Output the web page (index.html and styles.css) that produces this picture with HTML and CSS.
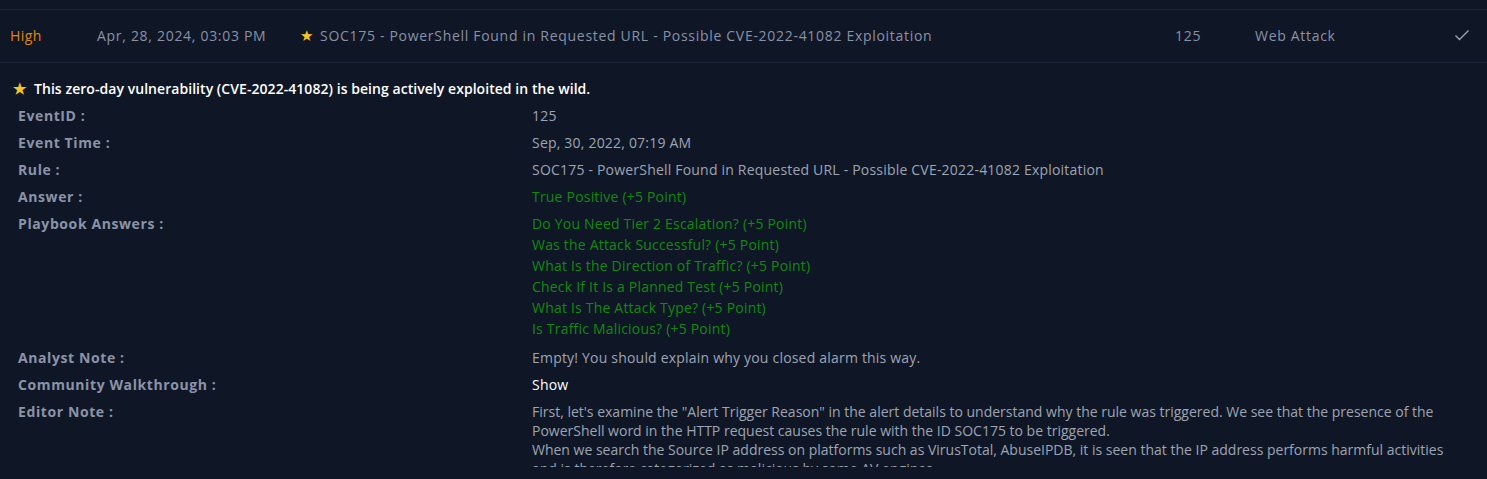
FILE: index.html
```html
<!DOCTYPE html>
<html>
<head>
<meta charset="utf-8">
<link rel="stylesheet" href="styles.css">
</head>
<body>
<div class="page">
  <div class="row">
    <div class="c-sev">High</div>
    <div class="c-date">Apr, 28, 2024, 03:03 PM</div>
    <div class="c-title"><span class="star">★</span>SOC175 - PowerShell Found in Requested URL - Possible CVE-2022-41082 Exploitation</div>
    <div class="c-id">125</div>
    <div class="c-type">Web Attack</div>
    <div class="c-check">
      <svg width="16" height="12" viewBox="0 0 16 12"><path d="M1.5 6.5 L5.5 10.5 L14.5 1.5" fill="none" stroke="#9aa2b6" stroke-width="1.4"/></svg>
    </div>
  </div>
  <div class="details">
    <div class="notice"><span class="star">★</span>This zero-day vulnerability (CVE-2022-41082) is being actively exploited in the wild.</div>
    <div class="grid">
      <div class="lbl">EventID :</div>
      <div class="val">125</div>
      <div class="lbl">Event Time :</div>
      <div class="val">Sep, 30, 2022, 07:19 AM</div>
      <div class="lbl">Rule :</div>
      <div class="val">SOC175 - PowerShell Found in Requested URL - Possible CVE-2022-41082 Exploitation</div>
      <div class="lbl">Answer :</div>
      <div class="val green">True Positive (+5 Point)</div>
      <div class="lbl">Playbook Answers :</div>
      <div class="val green list">
        <div>Do You Need Tier 2 Escalation? (+5 Point)</div>
        <div>Was the Attack Successful? (+5 Point)</div>
        <div>What Is the Direction of Traffic? (+5 Point)</div>
        <div>Check If It Is a Planned Test (+5 Point)</div>
        <div>What Is The Attack Type? (+5 Point)</div>
        <div>Is Traffic Malicious? (+5 Point)</div>
      </div>
      <div class="lbl">Analyst Note :</div>
      <div class="val">Empty! You should explain why you closed alarm this way.</div>
      <div class="lbl">Community Walkthrough :</div>
      <div class="val show">Show</div>
      <div class="lbl">Editor Note :</div>
      <div class="val note">First, let's examine the "Alert Trigger Reason" in the alert details to understand why the rule was triggered. We see that the presence of the PowerShell word in the HTTP request causes the rule with the ID SOC175 to be triggered.<br>When we search the Source IP address on platforms such as VirusTotal, AbuseIPDB, it is seen that the IP address performs harmful activities and is therefore categorized as malicious by some AV engines.</div>
    </div>
  </div>
</div>
</body>
</html>
```

FILE: styles.css
```css
html, body {
  margin: 0;
  padding: 0;
  background: #0f1726;
  overflow: hidden;
}
body {
  font-family: "Open Sans", "Noto Sans", sans-serif;
  font-size: 14px;
  color: #9ea4b3;
}
.page {
  padding-top: 9px;
  height: 458px;
  overflow: hidden;
}
.row {
  display: flex;
  align-items: center;
  padding-bottom: 2px;
  box-sizing: border-box;
  height: 54px;
  border-top: 1px solid #1a2336;
  border-bottom: 1px solid #1a2336;
  letter-spacing: 0.7px;
  color: #8a91a6;
  font-size: 14px;
}
.c-sev { width: 87px; padding-left: 10px; color: #e0860a; letter-spacing: 0.4px; }
.c-date { width: 203px; }
.c-title { width: 875px; display: flex; align-items: center; }
.c-id { width: 80px; }
.c-type { flex: 1; }
.c-check { width: 33px; }
.star { color: #f7c325; margin-right: 7px; font-size: 15px; letter-spacing: 0; }
.details {
  padding: 16px 0 0 13px;
}
.notice {
  color: #ffffff;
  font-weight: 600;
  font-size: 14px;
  letter-spacing: 0.05px;
  display: flex;
  align-items: center;
  height: 18px;
}
.notice .star { margin-right: 8px; }
.grid {
  display: grid;
  grid-template-columns: 514px 1fr;
  padding-left: 5px;
  padding-top: 9px;
  row-gap: 8px;
  line-height: 19px;
  padding-right: 22px;
}
.lbl {
  color: #8b93a8;
  font-weight: 700;
  letter-spacing: 0.6px;
}
.val { color: #9ea4b3; letter-spacing: 0.2px; }
.green { color: #0f8a10; }
.list div { line-height: 21px; }
.list { margin-top: -1px; margin-bottom: 1px; }
.show { color: #ffffff; }
.note { line-height: 19px; letter-spacing: 0; }
```
